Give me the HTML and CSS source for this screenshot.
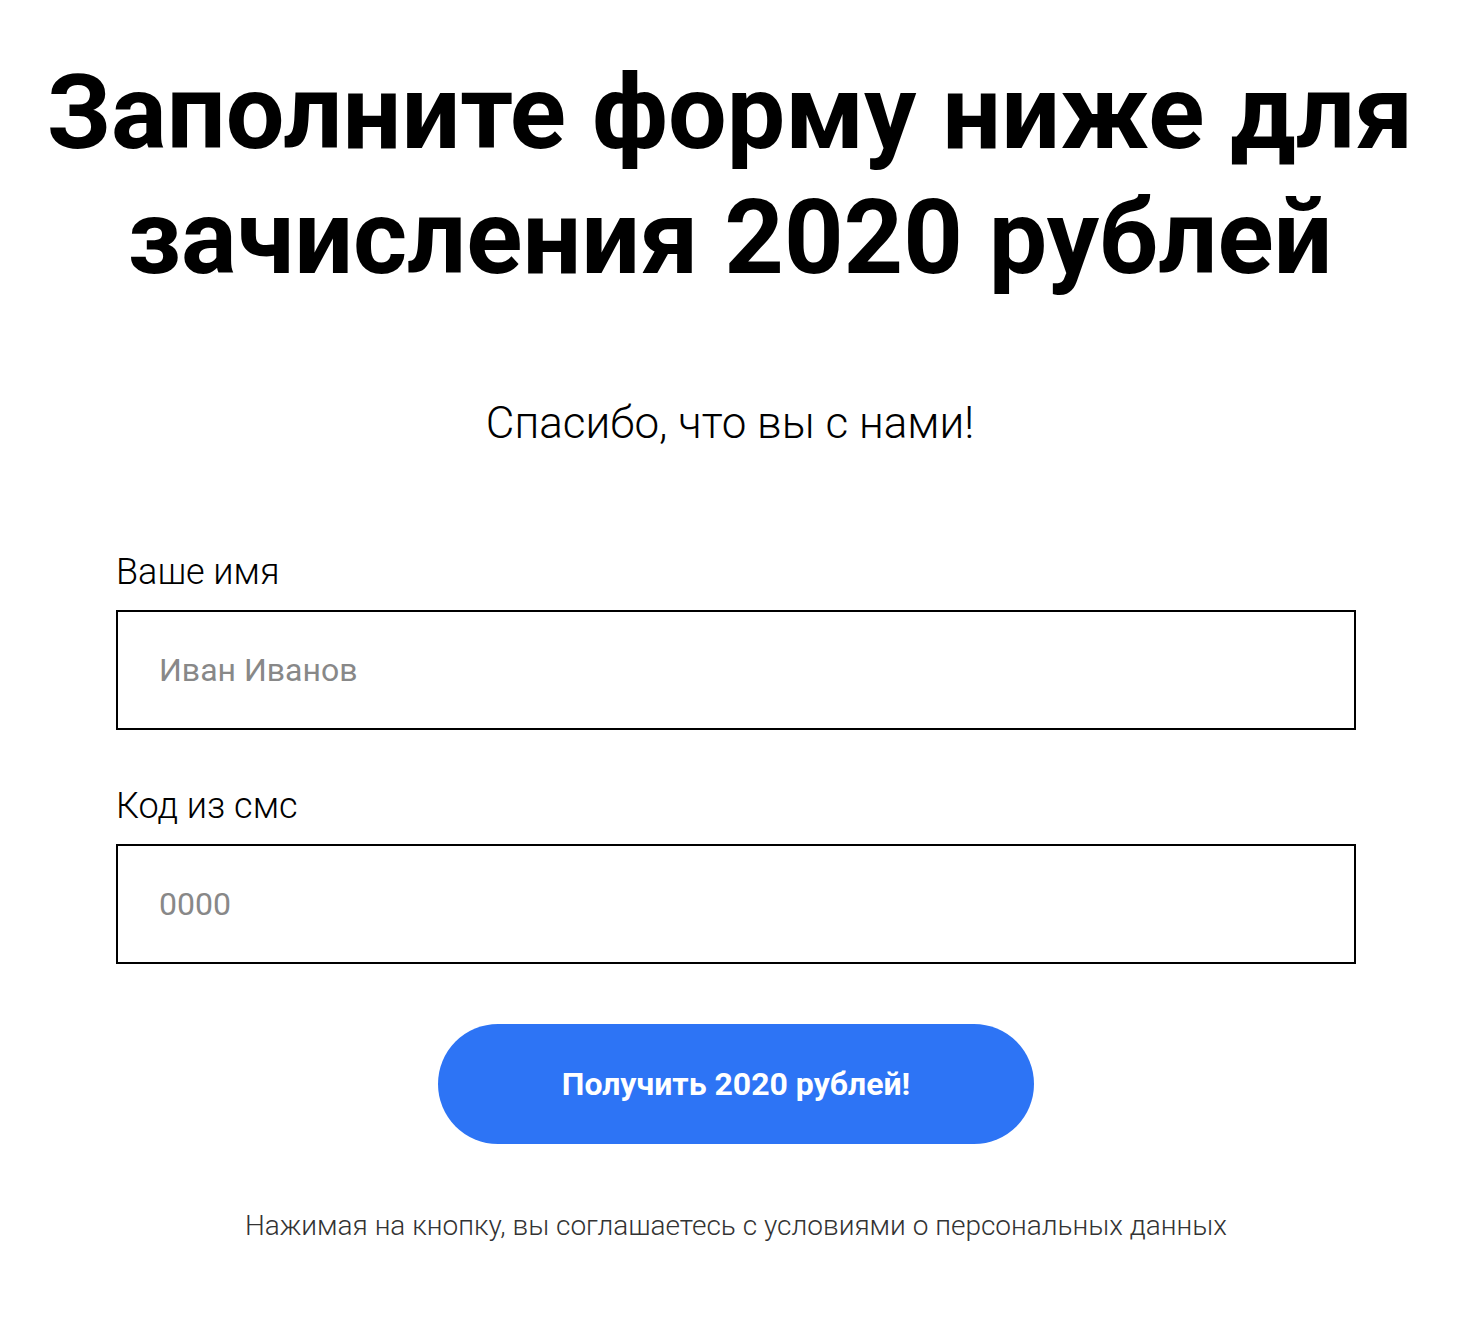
FILE: index.html
```html
<!DOCTYPE html>
<html lang="ru">
  <head>
    <meta charset="UTF-8" />
    <meta name="viewport" content="width=device-width, initial-scale=1.0" />
    <title>Зачисление 2020 рублей</title>
    <link rel="stylesheet" href="styles.css">
  </head>
  <body>
    <header class="header">
      <h1 class="title">Заполните форму ниже для<br />зачисления 2020 рублей</h1>
      <p class="subtitle">Спасибо, что вы с нами!</p>
    </header>

    <main class="container">
      <!-- Form -->
      <form class="form" onsubmit="return false">
        <div class="input-group">
          <label for="userName">Ваше имя</label>
          <input type="text" id="userName" placeholder="Иван Иванов" />
        </div>
        <div class="input-group">
          <label for="smsCode">Код из смс</label>
          <input type="text" id="smsCode" placeholder="0000" />
        </div>
        <button class="button" type="submit">Получить 2020 рублей!</button>
        <p class="note">Нажимая на кнопку, вы соглашаетесь с условиями о персональных данных</p>
      </form>
    </main>
  </body>
</html>
```

FILE: styles.css
```css
body {
  font-family: Roboto, "Noto Sans", Arial, sans-serif;
  margin: 0;
  padding: 0;
  background: #fff;
  color: #000;
}
.header {
  padding: 50px 12px 0 0;
  text-align: center;
}
.title {
  font-size: 104px;
  font-weight: 700;
  line-height: 125px;
  margin: 0;
}
.subtitle {
  font-size: 44px;
  font-weight: 300;
  line-height: 1.2;
  margin: 97px 0 0;
}
.container {
  max-width: 1240px;
  margin: 101px auto 0;
}
.input-group {
  margin-bottom: 55px;
}
.input-group label {
  display: block;
  font-size: 36px;
  font-weight: 300;
  line-height: 1.2;
  margin-bottom: 16px;
}
.input-group input {
  display: block;
  box-sizing: border-box;
  width: 100%;
  height: 120px;
  padding: 0 41px;
  border: 2px solid #000;
  border-radius: 0;
  font-family: inherit;
  font-size: 32px;
  color: #000;
  outline: none;
}
.input-group input::placeholder {
  color: #888;
}
.input-group:last-of-type {
  margin-bottom: 60px;
}
.button {
  display: block;
  width: 596px;
  height: 120px;
  margin: 0 auto;
  background: #2d74f5;
  color: #fff;
  border: none;
  border-radius: 60px;
  font-family: inherit;
  font-size: 32px;
  font-weight: 700;
  cursor: pointer;
}
.note {
  margin: 65px 0 0;
  text-align: center;
  font-size: 28px;
  font-weight: 300;
  color: #333;
}
```
